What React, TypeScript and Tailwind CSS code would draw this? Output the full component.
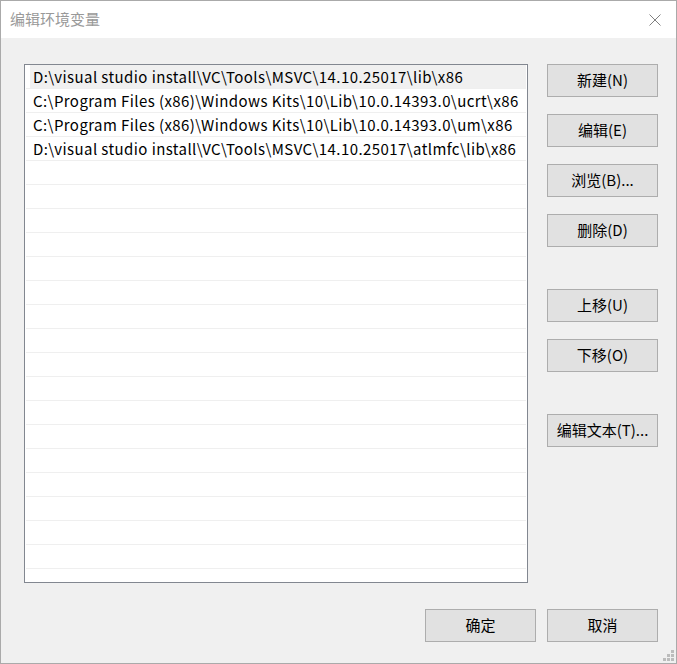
const paths = [
  "D:\\visual studio install\\VC\\Tools\\MSVC\\14.10.25017\\lib\\x86",
  "C:\\Program Files (x86)\\Windows Kits\\10\\Lib\\10.0.14393.0\\ucrt\\x86",
  "C:\\Program Files (x86)\\Windows Kits\\10\\Lib\\10.0.14393.0\\um\\x86",
  "D:\\visual studio install\\VC\\Tools\\MSVC\\14.10.25017\\atlmfc\\lib\\x86",
];

const font = "font-['Noto_Sans_CJK_SC','Noto_Sans',sans-serif]";

function Button({ label, className = "" }: { label: string; className?: string }) {
  return (
    <div
      className={`flex h-[33px] w-[111px] items-center justify-center border border-[#adadad] bg-[#e1e1e1] text-[15px] text-black ${className}`}
    >
      {label}
    </div>
  );
}

export default function App() {
  const rows = Array.from({ length: 22 }, (_, i) => paths[i] ?? "");

  return (
    <div className={`flex h-[664px] w-[677px] flex-col border border-[#aaaaaa] bg-[#f0f0f0] ${font}`}>
      {/* title bar */}
      <div className="flex h-[37px] shrink-0 items-center justify-between bg-white pl-[9px] pr-[15px]">
        <span className="text-[15px] text-[#999999]">编辑环境变量</span>
        <svg width="12" height="12" viewBox="0 0 12 12" className="mt-px">
          <path d="M0.5 0.5L11.5 11.5M11.5 0.5L0.5 11.5" stroke="#808080" strokeWidth="1" />
        </svg>
      </div>

      <div className="flex flex-1 flex-col pl-[23px] pr-[18px] pt-[26px]">
        <div className="flex gap-[19px]">
          {/* list */}
          <div className="h-[519px] w-[504px] overflow-hidden border border-[#828790] bg-white px-px">
            {rows.map((p, i) => (
              <div key={i} className="flex h-[24px] border-b border-[#efefef]">
                <div
                  className={`ml-[4px] flex flex-1 items-center pl-[3px] text-[15px] leading-none tracking-[0.42px] text-black ${
                    i === 0 ? "bg-[#f0f0f0]" : ""
                  }`}
                >
                  {p}
                </div>
              </div>
            ))}
          </div>

          {/* side buttons */}
          <div className="flex flex-col">
            <Button label="新建(N)" />
            <Button label="编辑(E)" className="mt-[17px]" />
            <Button label="浏览(B)..." className="mt-[17px]" />
            <Button label="删除(D)" className="mt-[17px]" />
            <Button label="上移(U)" className="mt-[42px]" />
            <Button label="下移(O)" className="mt-[17px]" />
            <Button label="编辑文本(T)..." className="mt-[42px]" />
          </div>
        </div>

        <div className="mt-[26px] flex justify-end gap-[11px]">
          <Button label="确定" />
          <Button label="取消" />
        </div>

        {/* resize grip */}
        <div className="mt-auto flex justify-end">
          <svg width="12" height="12" viewBox="0 0 12 12" className="-mr-[17px] mb-px">
            <rect x="8" y="0" width="3" height="3" fill="#bcbcbc" />
            <rect x="4" y="4" width="3" height="3" fill="#bcbcbc" />
            <rect x="8" y="4" width="3" height="3" fill="#bcbcbc" />
            <rect x="0" y="8" width="3" height="3" fill="#bcbcbc" />
            <rect x="4" y="8" width="3" height="3" fill="#bcbcbc" />
            <rect x="8" y="8" width="3" height="3" fill="#bcbcbc" />
          </svg>
        </div>
      </div>
    </div>
  );
}
